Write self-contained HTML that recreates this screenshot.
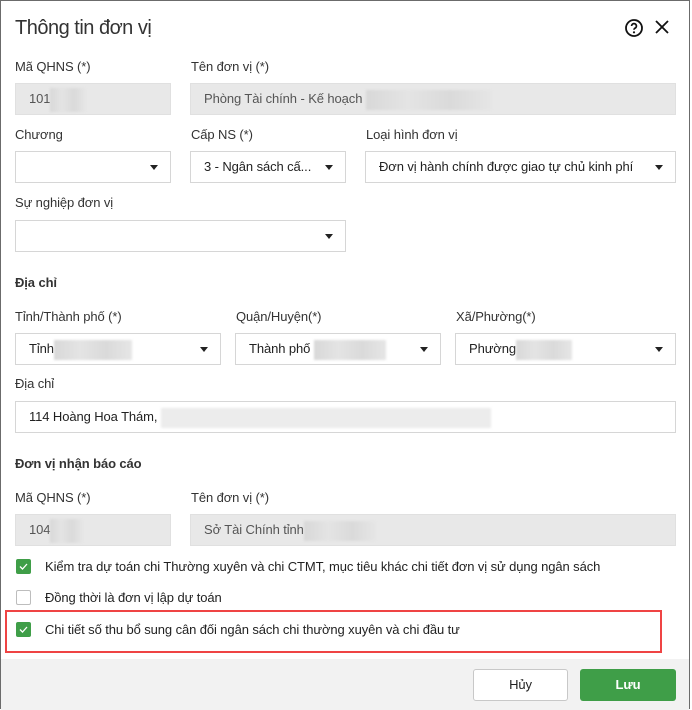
<!DOCTYPE html>
<html><head><meta charset="utf-8"><style>
*{box-sizing:border-box;margin:0;padding:0}
body{width:692px;height:709px;background:#fff;font-family:"Liberation Sans",sans-serif;font-size:13px;color:#212121;position:relative;overflow:hidden;letter-spacing:-0.1px}
.dlg{position:absolute;left:0;top:0;width:690px;height:709px;border:1px solid #6b6b6b;border-bottom:none;background:#fff}
.a{position:absolute}
.lbl{position:absolute;color:#333;font-size:13px}
.in{position:absolute;border:1px solid #d6d6d6;background:#fff;height:32px;padding:0 0 0 13px;line-height:30px;color:#222;white-space:nowrap;overflow:hidden}
.dis{background:#e8e8e8;border-color:#e0e0e0;color:#555}
.arr{position:absolute;right:12px;top:13px;width:0;height:0;border-left:4px solid transparent;border-right:4px solid transparent;border-top:5px solid #222}
.blur{display:inline-block;vertical-align:middle;height:20px;background:linear-gradient(90deg,#d8d8d8,#e4e4e4,#dadada,#e6e6e6);filter:blur(1px)}
.bold{position:absolute;font-weight:bold;color:#333}
.cb{position:absolute;width:15px;height:15px;border-radius:2px;background:#3f9e48}
.cb.off{background:#fff;border:1px solid #bdbdbd}
.cb svg{position:absolute;left:2px;top:2px}
.ct{position:absolute;left:44px;color:#222}
</style></head><body>
<div class="dlg">
<div class="a" style="left:14px;top:16px;font-size:20px;color:#333;letter-spacing:-0.5px">Thông tin đơn vị</div>
<svg class="a" style="left:623px;top:17px" width="20" height="20" viewBox="0 0 20 20"><circle cx="10" cy="10" r="8" fill="none" stroke="#111" stroke-width="1.8"/><path d="M7.6 8a2.4 2.4 0 1 1 3.4 2.2c-.8.4-1 .8-1 1.6" fill="none" stroke="#111" stroke-width="1.7"/><circle cx="10" cy="14.3" r="1.1" fill="#111"/></svg>
<svg class="a" style="left:653px;top:18px" width="16" height="16" viewBox="0 0 16 16"><path d="M2 2L14 14M14 2L2 14" stroke="#111" stroke-width="1.8"/></svg>

<div class="lbl" style="left:14px;top:58px">Mã QHNS (*)</div>
<div class="lbl" style="left:190px;top:58px">Tên đơn vị (*)</div>
<div class="in dis" style="left:14px;top:82px;width:156px">101<span class="blur" style="width:36px;height:24px"></span></div>
<div class="in dis" style="left:189px;top:82px;width:486px">Phòng Tài chính - Kế hoạch <span class="blur" style="width:126px"></span></div>

<div class="lbl" style="left:14px;top:126px">Chương</div>
<div class="lbl" style="left:190px;top:126px">Cấp NS (*)</div>
<div class="lbl" style="left:365px;top:126px">Loại hình đơn vị</div>
<div class="in" style="left:14px;top:150px;width:156px"><span class="arr"></span></div>
<div class="in" style="left:189px;top:150px;width:156px">3 - Ngân sách cấ...<span class="arr"></span></div>
<div class="in" style="left:364px;top:150px;width:311px">Đơn vị hành chính được giao tự chủ kinh phí<span class="arr"></span></div>

<div class="lbl" style="left:14px;top:194px">Sự nghiệp đơn vị</div>
<div class="in" style="left:14px;top:219px;width:331px"><span class="arr"></span></div>

<div class="bold" style="left:14px;top:274px">Địa chỉ</div>
<div class="lbl" style="left:14px;top:308px">Tỉnh/Thành phố (*)</div>
<div class="lbl" style="left:235px;top:308px">Quận/Huyện(*)</div>
<div class="lbl" style="left:455px;top:308px">Xã/Phường(*)</div>
<div class="in" style="left:14px;top:332px;width:206px">Tỉnh<span class="blur" style="width:78px"></span><span class="arr"></span></div>
<div class="in" style="left:234px;top:332px;width:206px">Thành phố <span class="blur" style="width:72px"></span><span class="arr"></span></div>
<div class="in" style="left:454px;top:332px;width:221px">Phường<span class="blur" style="width:56px"></span><span class="arr"></span></div>

<div class="lbl" style="left:14px;top:375px">Địa chỉ</div>
<div class="in" style="left:14px;top:400px;width:661px">114 Hoàng Hoa Thám, <span class="blur" style="width:330px;background:#ececec"></span></div>

<div class="bold" style="left:14px;top:455px">Đơn vị nhận báo cáo</div>
<div class="lbl" style="left:14px;top:489px">Mã QHNS (*)</div>
<div class="lbl" style="left:190px;top:489px">Tên đơn vị (*)</div>
<div class="in dis" style="left:14px;top:513px;width:156px">104<span class="blur" style="width:33px;height:24px"></span></div>
<div class="in dis" style="left:189px;top:513px;width:486px">Sở Tài Chính tỉnh<span class="blur" style="width:72px"></span></div>

<div class="cb" style="left:15px;top:558px"><svg width="11" height="11" viewBox="0 0 11 11"><path d="M2 5.5L4.5 8L9 3" fill="none" stroke="#fff" stroke-width="1.3"/></svg></div>
<div class="ct" style="top:558px">Kiểm tra dự toán chi Thường xuyên và chi CTMT, mục tiêu khác chi tiết đơn vị sử dụng ngân sách</div>
<div class="cb off" style="left:15px;top:589px"></div>
<div class="ct" style="top:589px">Đồng thời là đơn vị lập dự toán</div>
<div class="a" style="left:4px;top:609px;width:657px;height:43px;border:2px solid #ef4444"></div>
<div class="cb" style="left:15px;top:621px"><svg width="11" height="11" viewBox="0 0 11 11"><path d="M2 5.5L4.5 8L9 3" fill="none" stroke="#fff" stroke-width="1.3"/></svg></div>
<div class="ct" style="top:621px">Chi tiết số thu bổ sung cân đối ngân sách chi thường xuyên và chi đầu tư</div>

<div class="a" style="left:0;top:658px;width:688px;height:51px;background:#f2f2f2"></div>
<div class="a" style="left:472px;top:668px;width:95px;height:32px;border:1px solid #c8c8c8;border-radius:3px;background:#fff;text-align:center;line-height:30px;color:#222">Hủy</div>
<div class="a" style="left:579px;top:668px;width:96px;height:32px;border-radius:3px;background:#3f9e48;text-align:center;line-height:32px;color:#fff;font-weight:bold">Lưu</div>
</div>
</body></html>
